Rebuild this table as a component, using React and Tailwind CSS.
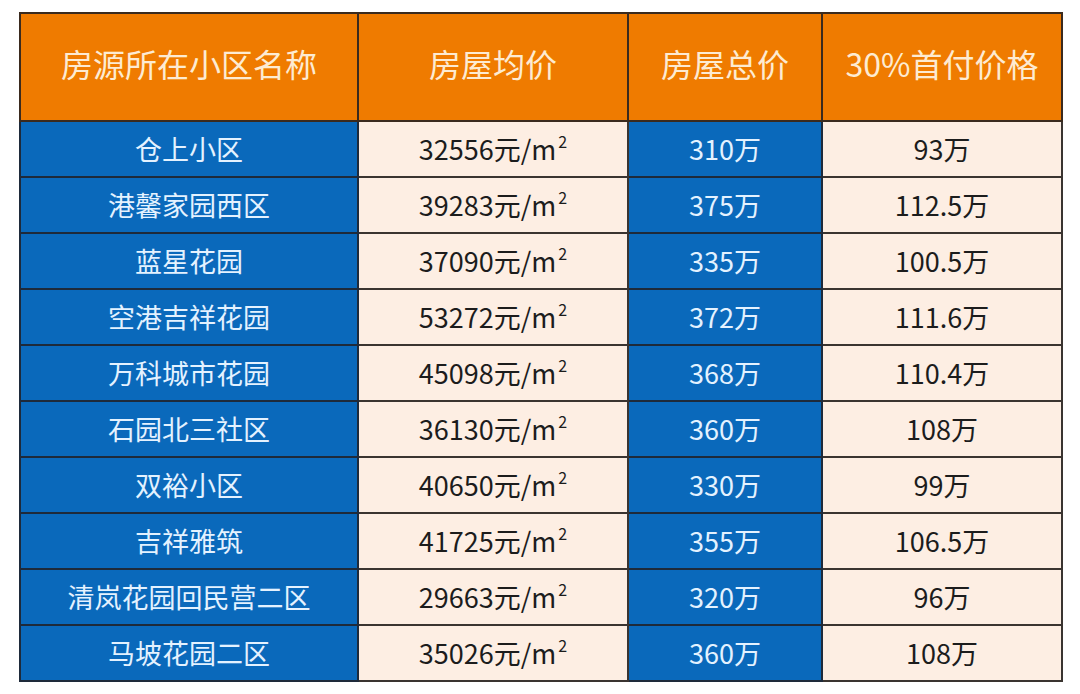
import React from 'react';

const rows = [
  ['仓上小区', '32556', '310万', '93万'],
  ['港馨家园西区', '39283', '375万', '112.5万'],
  ['蓝星花园', '37090', '335万', '100.5万'],
  ['空港吉祥花园', '53272', '372万', '111.6万'],
  ['万科城市花园', '45098', '368万', '110.4万'],
  ['石园北三社区', '36130', '360万', '108万'],
  ['双裕小区', '40650', '330万', '99万'],
  ['吉祥雅筑', '41725', '355万', '106.5万'],
  ['清岚花园回民营二区', '29663', '320万', '96万'],
  ['马坡花园二区', '35026', '360万', '108万'],
];

const font = { fontFamily: '"Noto Sans CJK SC", "Noto Sans", sans-serif' };

const Head = "border-2 border-[#3a2a1e] bg-[#ef7b00] text-[#fdebd2] text-[32px] font-normal text-center align-middle pb-2";
const Blue = "border-2 border-[#1e2a3a] bg-[#0a69bb] text-[#e4f2ff] text-[27px] font-normal text-center align-middle h-[56px]";
const Cream = "border-2 border-[#3a3430] bg-[#fdeee3] text-[#1c1c1c] text-[27px] text-center align-middle h-[56px]";

export default function App() {
  return (
    <div className="w-[1080px] h-[694px] bg-white pt-[12px] pl-[19px]" style={font}>
      <table className="border-collapse table-fixed w-[1042px]">
        <colgroup>
          <col className="w-[338px]" />
          <col className="w-[270px]" />
          <col className="w-[194px]" />
          <col className="w-[240px]" />
        </colgroup>
        <thead>
          <tr className="h-[108px]">
            <th className={Head}>房源所在小区名称</th>
            <th className={Head}>房屋均价</th>
            <th className={Head}>房屋总价</th>
            <th className={Head}>30%首付价格</th>
          </tr>
        </thead>
        <tbody>
          {rows.map((r) => (
            <tr key={r[0]}>
              <td className={Blue}>{r[0]}</td>
              <td className={Cream}>
                {r[1]}元/m<span className="text-[16px] relative -top-[12px] ml-[2px]">2</span>
              </td>
              <td className={Blue}>{r[2]}</td>
              <td className={Cream}>{r[3]}</td>
            </tr>
          ))}
        </tbody>
      </table>
    </div>
  );
}
